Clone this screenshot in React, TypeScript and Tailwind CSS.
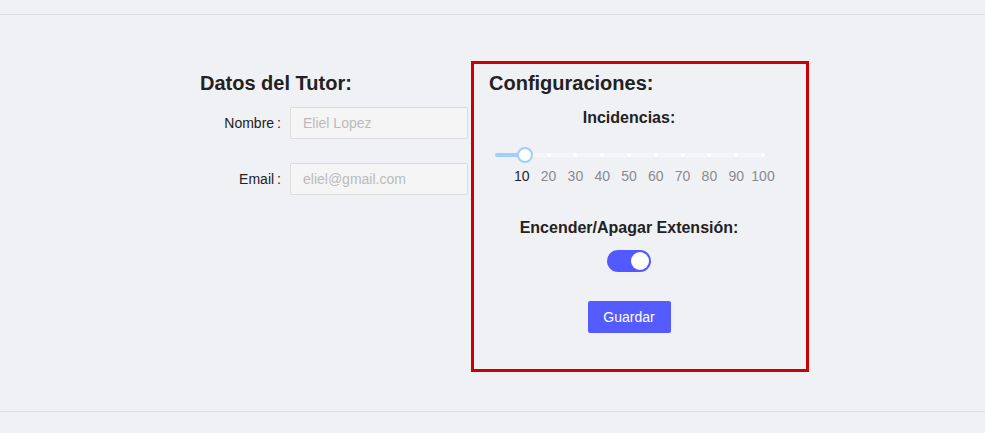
const MARKS = [10, 20, 30, 40, 50, 60, 70, 80, 90, 100];

function Field({ label, placeholder }: { label: string; placeholder: string }) {
  return (
    <div className="flex items-center h-8">
      <label className="w-[81px] text-right text-sm text-[#222]">
        {label}
        <span className="ml-[3px]">:</span>
      </label>
      <input
        readOnly
        placeholder={placeholder}
        className="ml-[9px] w-[178px] h-8 bg-[#f5f5f5] border border-[#dcdcdc] rounded-[2px] px-3 text-sm text-[#333] placeholder:text-[#bbb] outline-none"
      />
    </div>
  );
}

function Slider({ value }: { value: number }) {
  return (
    <div className="mx-[6px] w-[268px]">
      <div className="relative h-[4px] rounded-full bg-[#f6f6f8]">
        <div className="absolute left-0 top-0 h-full rounded-full bg-[#a0cfff]" style={{ width: `calc(${value}% + 3px)` }} />
        {MARKS.slice(1).map((m) => (
          <div
            key={m}
            className="absolute top-1/2 w-[4px] h-[4px] -translate-x-1/2 -translate-y-1/2 rounded-full bg-white"
            style={{ left: `${m}%` }}
          />
        ))}
        <div
          className="absolute top-1/2 w-[16px] h-[16px] -translate-x-1/2 -translate-y-1/2 rounded-full bg-white border-2 border-[#a0cfff]"
          style={{ left: `calc(${value}% + 3px)` }}
        />
      </div>
      <div className="relative h-5 mt-[9px]">
        {MARKS.map((m) => (
          <span
            key={m}
            className={`absolute top-0 -translate-x-1/2 text-sm leading-5 ${m === value ? 'text-[#1f1d33]' : 'text-[#8a8a8e]'}`}
            style={{ left: `${m}%` }}
          >
            {m}
          </span>
        ))}
      </div>
    </div>
  );
}

export default function App() {
  return (
    <div className="w-[985px] h-[433px] bg-[#f0f1f5] overflow-hidden" style={{ fontFamily: '"Liberation Sans", Arial, sans-serif' }}>
      <div className="h-[15px] border-b border-[#dcdde2]" />
      <div className="h-[397px] border-b border-[#dcdde2] flex items-start pt-[46px] pl-[200px]">
        {/* Datos del tutor */}
        <div className="w-[271px] shrink-0 pt-[8px]">
          <h2 className="text-[20px] leading-7 font-bold text-[#222]">Datos del Tutor:</h2>
          <div className="mt-[10px] flex flex-col gap-6">
            <Field label="Nombre" placeholder="Eliel Lopez" />
            <Field label="Email" placeholder="eliel@gmail.com" />
          </div>
        </div>

        {/* Configuraciones */}
        <div className="w-[338px] h-[311px] shrink-0 border-[3px] border-[#cc0000] pt-[5px] pl-[15px]">
          <h2 className="text-[20px] leading-7 font-bold text-[#222]">Configuraciones:</h2>
          <div className="w-[280px] flex flex-col items-center">
            <h3 className="mt-[9px] text-base leading-6 font-bold text-[#222]">Incidencias:</h3>
            <div className="mt-[23px] self-start">
              <Slider value={10} />
            </div>
            <h3 className="mt-[30px] text-base leading-6 font-bold text-[#222]">Encender/Apagar Extensión:</h3>
            <button className="mt-[10px] w-[44px] h-[22px] rounded-full bg-[#5159ff] flex items-center justify-end px-[2px]">
              <span className="w-[18px] h-[18px] rounded-full bg-white" />
            </button>
            <button className="mt-[29px] w-[83px] h-8 rounded-[2px] bg-[#545cff] text-white text-sm">Guardar</button>
          </div>
        </div>
      </div>
    </div>
  );
}
